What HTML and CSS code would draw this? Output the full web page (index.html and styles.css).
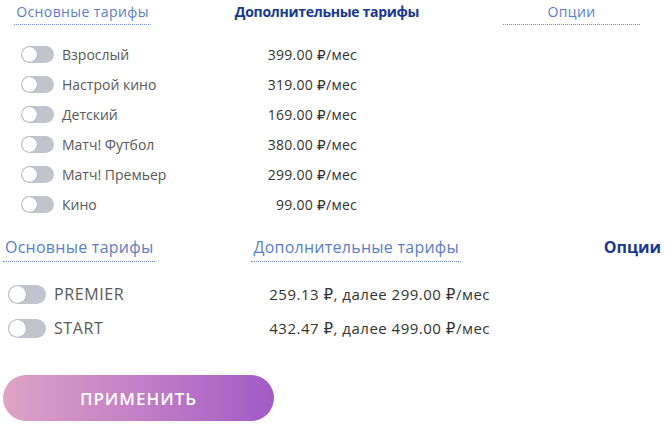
FILE: index.html
```html
<!DOCTYPE html>
<html lang="ru">
<head>
<meta charset="utf-8">
<link rel="stylesheet" href="styles.css">
</head>
<body>
<section class="block block-a">
  <nav class="tabs tabs-a">
    <span class="tab">Основные тарифы</span>
    <span class="tab tab-active">Дополнительные тарифы</span>
    <span class="tab tab-wide">Опции</span>
  </nav>
  <ul class="list list-a">
    <li class="row"><span class="toggle"></span><span class="name">Взрослый</span><span class="price">399.00 ₽/мес</span></li>
    <li class="row"><span class="toggle"></span><span class="name">Настрой кино</span><span class="price">319.00 ₽/мес</span></li>
    <li class="row"><span class="toggle"></span><span class="name">Детский</span><span class="price">169.00 ₽/мес</span></li>
    <li class="row"><span class="toggle"></span><span class="name">Матч! Футбол</span><span class="price">380.00 ₽/мес</span></li>
    <li class="row"><span class="toggle"></span><span class="name">Матч! Премьер</span><span class="price">299.00 ₽/мес</span></li>
    <li class="row"><span class="toggle"></span><span class="name">Кино</span><span class="price">99.00 ₽/мес</span></li>
  </ul>
</section>
<section class="block block-b">
  <nav class="tabs tabs-b">
    <span class="tab">Основные тарифы</span>
    <span class="tab tab-mid">Дополнительные тарифы</span>
    <span class="tab tab-active tab-last">Опции</span>
  </nav>
  <ul class="list list-b">
    <li class="row"><span class="toggle"></span><span class="name">PREMIER</span><span class="price">259.13 ₽, далее 299.00 ₽/мес</span></li>
    <li class="row"><span class="toggle"></span><span class="name">START</span><span class="price">432.47 ₽, далее 499.00 ₽/мес</span></li>
  </ul>
</section>
<button class="apply" type="button">ПРИМЕНИТЬ</button>
</body>
</html>
```
FILE: styles.css
```css
* { box-sizing: border-box; }
html, body { margin: 0; padding: 0; background: #fff; }
body {
  width: 665px;
  height: 429px;
  overflow: hidden;
  font-family: "Open Sans", "DejaVu Sans", sans-serif;
  color: #444;
}
.tabs { display: flex; align-items: flex-end; }
.tab {
  color: #5b7ec6;
  border-bottom: 1px dotted #6f8bcf;
  white-space: nowrap;
  text-align: center;
}
.tab-active {
  color: #17388f;
  font-weight: 700;
  letter-spacing: -0.3px;
  border-bottom-color: transparent;
}
/* section A */
.block-a { padding: 4px 0 0 14px; }
.tabs-a { width: 626px; justify-content: space-between; font-size: 14px; line-height: 16px; letter-spacing: 0.4px; }
.tabs-a .tab { min-width: 137px; padding: 0 2px 4px; }
.tabs-a .tab-active { min-width: 0; }
.list { list-style: none; margin: 0; padding: 0; }
.list-a { margin: 14px 0 0 7px; width: 336px; font-size: 14px; }
.row { display: flex; align-items: center; }
.list-a .row { height: 30px; }
.toggle {
  position: relative;
  flex: none;
  width: 33px;
  height: 17px;
  border-radius: 9px;
  background: #c1c4cd;
}
.toggle::after {
  content: "";
  position: absolute;
  left: 1px;
  top: 1px;
  width: 15px;
  height: 15px;
  border-radius: 50%;
  background: #fff;
  box-shadow: 0 0 1px rgba(0,0,0,.35);
}
.name { flex: 1; margin-left: 8px; color: #595959; }
.price { color: #333; letter-spacing: 0.25px; }
/* section B */
.block-b { padding: 19px 0 0 3px; }
.tabs-b { font-size: 16px; line-height: 19px; letter-spacing: 0.25px; }
.tabs-b .tab { padding: 0 2px 4px; }
.tabs-b .tab-active { letter-spacing: 0; }
.tabs-b .tab-mid { margin-left: 96px; }
.tabs-b .tab-last { margin-left: auto; padding-right: 4px; }
.list-b { margin: 15px 0 0 5px; width: 482px; font-size: 15px; }
.list-b .row { height: 34px; }
.list-b .name { font-size: 16px; letter-spacing: 0.6px; }
.list-b .price { letter-spacing: 0.5px; }
.list-b .toggle { width: 38px; height: 19px; border-radius: 10px; }
.list-b .toggle::after { width: 17px; height: 17px; }
.apply {
  display: block;
  margin: 30px 0 0 3px;
  width: 271px;
  height: 46px;
  border: 0;
  border-radius: 23px;
  background: linear-gradient(90deg, #dea3c5 0%, #c37fc6 50%, #a25ac6 100%);
  color: #fff;
  font-family: "Open Sans", "DejaVu Sans", sans-serif;
  font-size: 17px;
  font-weight: 600;
  letter-spacing: 1px;
}
```
